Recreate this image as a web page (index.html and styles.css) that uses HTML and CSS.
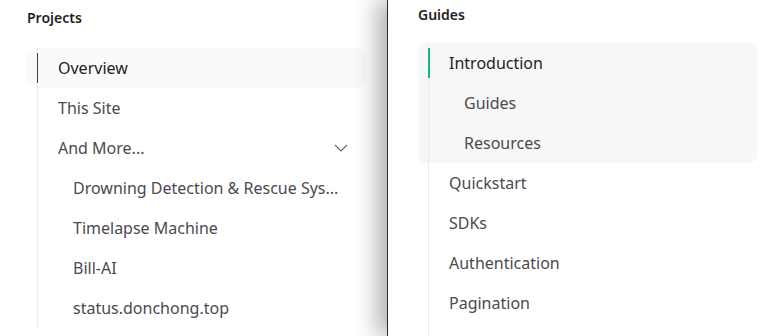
FILE: index.html
```html
<!DOCTYPE html>
<html lang="en">
  <head>
    <meta charset="UTF-8" />
    <meta name="viewport" content="width=device-width, initial-scale=1.0" />
    <title>Sidebar</title>

    <link rel="stylesheet" href="styles.css">
  </head>
  <body>
    <div class="panels">
      <aside class="panel panel-left">
        <h2 class="panel-title">Projects</h2>
        <ul class="nav">
          <li class="nav-item active"><a class="nav-link">Overview</a></li>
          <li class="nav-item"><a class="nav-link">This Site</a></li>
          <li class="nav-item">
            <a class="nav-link">
              <span class="nav-text">And More...</span>
              <svg class="chevron" width="14" height="8" viewBox="0 0 14 8">
                <path d="M1 1l6 6 6-6" fill="none" stroke="#666" stroke-width="1.1" />
              </svg>
            </a>
          </li>
          <li class="nav-item sub"><a class="nav-link"><span class="nav-text">Drowning Detection &amp; Rescue Sys...</span></a></li>
          <li class="nav-item sub"><a class="nav-link">Timelapse Machine</a></li>
          <li class="nav-item sub"><a class="nav-link">Bill-AI</a></li>
          <li class="nav-item sub"><a class="nav-link">status.donchong.top</a></li>
        </ul>
      </aside>

      <aside class="panel panel-right">
        <h2 class="panel-title">Guides</h2>
        <ul class="nav">
          <li class="nav-group">
            <ul class="nav">
              <li class="nav-item active green"><a class="nav-link">Introduction</a></li>
              <li class="nav-item sub"><a class="nav-link">Guides</a></li>
              <li class="nav-item sub"><a class="nav-link">Resources</a></li>
            </ul>
          </li>
          <li class="nav-item"><a class="nav-link">Quickstart</a></li>
          <li class="nav-item"><a class="nav-link">SDKs</a></li>
          <li class="nav-item"><a class="nav-link">Authentication</a></li>
          <li class="nav-item"><a class="nav-link">Pagination</a></li>
          <li class="nav-item"><span class="nav-link"></span></li>
        </ul>
      </aside>
    </div>
  </body>
</html>
```

FILE: styles.css
```css
body {
  margin: 0;
  padding: 0;
  font-family: "Noto Sans", "Open Sans", sans-serif;
  background: #fff;
  height: 336px;
  overflow: hidden;
}
.panels {
  display: flex;
  height: 336px;
}
.panel {
  box-sizing: border-box;
  height: 336px;
  overflow: hidden;
  background: #fff;
}
.panel-left {
  width: 387px;
  flex-shrink: 0;
  padding: 8px 21px 0 27px;
}
.panel-right {
  flex: 1;
  position: relative;
  z-index: 1;
  padding: 5px 21px 0 30px;
  border-left: 1px solid #2b2b2b;
  box-shadow: -10px 0 22px rgba(0, 0, 0, 0.3);
}
.panel-title {
  margin: 0 0 20px;
  font-size: 14px;
  line-height: 20px;
  font-weight: 600;
  color: #1f1f1f;
}
.panel-right .panel-title {
  margin-bottom: 18px;
}
.nav {
  list-style: none;
  margin: 0;
  padding: 0;
}
.nav-group {
  background: #f7f7f7;
  border-radius: 8px;
}
.nav-item {
  position: relative;
  padding-left: 10px;
  border-radius: 8px;
}
.nav-link {
  display: flex;
  align-items: center;
  height: 40px;
  box-sizing: border-box;
  padding: 0 18px 0 20px;
  border-left: 1px solid #ebebeb;
  font-size: 16px;
  color: #4a4a50;
  white-space: nowrap;
}
.sub .nav-link {
  padding-left: 35px;
}
.nav-text {
  flex: 1;
  min-width: 0;
  overflow: hidden;
}
.chevron {
  margin-left: 10px;
  flex-shrink: 0;
}
.nav-item.active {
  background: #fafafa;
}
.nav-group .nav-item.active {
  background: transparent;
}
.nav-item.active .nav-link {
  color: #222226;
}
.nav-item.active::before {
  content: "";
  position: absolute;
  left: 10px;
  top: 5px;
  bottom: 5px;
  width: 1px;
  background: #3c3c43;
}
.nav-item.green::before {
  width: 2px;
  background: #10b981;
}
```
